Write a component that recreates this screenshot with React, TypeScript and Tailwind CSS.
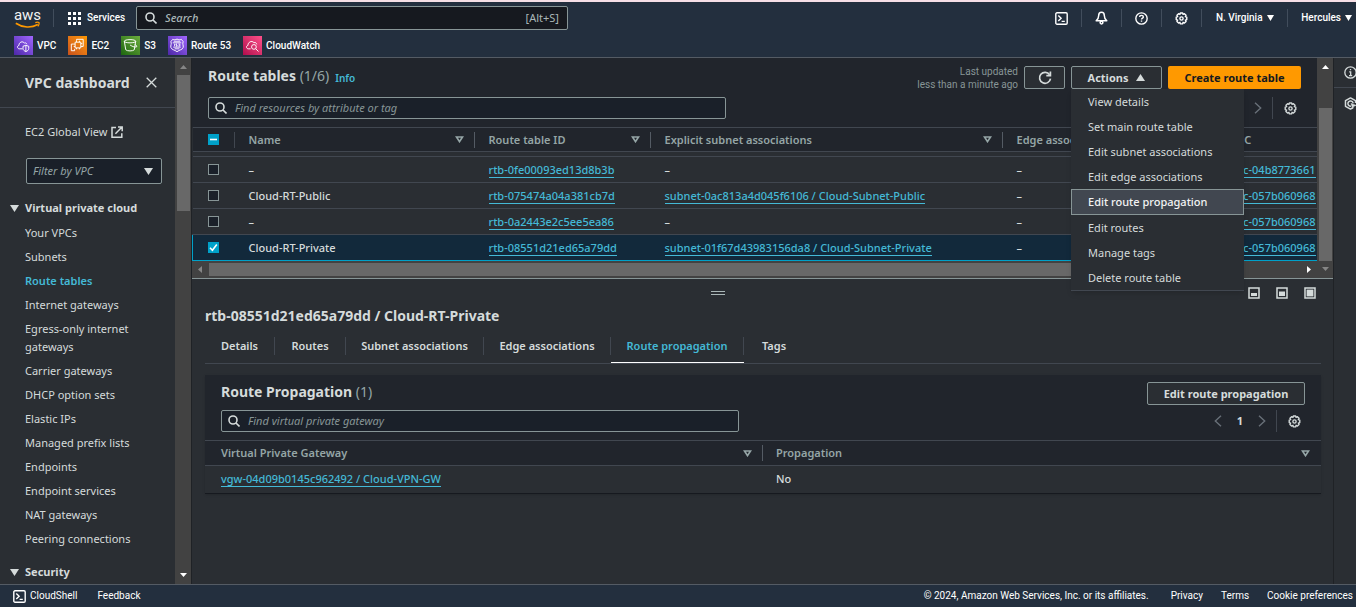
import React from "react";

type IconProps = { className?: string };

const NAV_FONT = "font-['Roboto','Noto_Sans',sans-serif]";

function SearchIcon({ className = "size-3" }: IconProps) {
  return (
    <svg viewBox="0 0 12 12" className={className} fill="none" stroke="currentColor" strokeWidth="1.6" aria-hidden="true">
      <circle cx="5" cy="5" r="4" />
      <path d="M8 8l3.5 3.5" />
    </svg>
  );
}

function GearIcon({ className = "size-[13px]" }: IconProps) {
  return (
    <svg viewBox="0 0 16 16" className={className} fill="none" stroke="currentColor" strokeWidth="1.7" strokeLinejoin="round" aria-hidden="true">
      <path d="M6.6 1.2h2.8l.5 1.7 1.7-.8 2 2-.9 1.6 1.8.6v3l-1.8.6.9 1.7-2 2-1.7-.9-.5 1.9H6.6l-.5-1.9-1.7.9-2-2 .9-1.7-1.8-.6v-3l1.8-.6-.9-1.6 2-2 1.7.8z" />
      <circle cx="8" cy="8" r="2" />
    </svg>
  );
}

function ShellIcon({ className = "size-[13px]" }: IconProps) {
  return (
    <svg viewBox="0 0 13 13" className={className} fill="none" stroke="currentColor" strokeWidth="1.4" aria-hidden="true">
      <rect x="0.8" y="0.8" width="11.4" height="11.4" rx="1.2" />
      <path d="M3.3 3.6l2.8 2.7-2.8 2.7M6.6 9.4h3.2" />
    </svg>
  );
}

function BellIcon() {
  return (
    <svg viewBox="0 0 13 14" className="h-[14px] w-[13px]" fill="none" stroke="currentColor" strokeWidth="1.5" strokeLinejoin="round" aria-hidden="true">
      <path d="M6.5 1.2c-1.900 0-2.800 1.500-2.800 3.200 0 2.600-.9 3.900-2.500 5.300h10.600c-1.600-1.400-2.500-2.700-2.500-5.300 0-1.700-.9-3.200-2.800-3.200z" />
      <circle cx="6.500" cy="11.600" r="1.400" />
    </svg>
  );
}

function HelpIcon() {
  return (
    <svg viewBox="0 0 14 14" className="size-[13px]" fill="none" stroke="currentColor" strokeWidth="1.5" aria-hidden="true">
      <circle cx="7" cy="7" r="6.100" />
      <path d="M5 5.500c0-1.200.900-1.900 2-1.900s2 .700 2 1.700c0 1.300-2 1.300-2 2.800M7 9.200v1.400" />
    </svg>
  );
}

function InfoIcon() {
  return (
    <svg viewBox="0 0 14 14" className="size-[13px]" fill="none" stroke="currentColor" strokeWidth="1.4" aria-hidden="true">
      <circle cx="7" cy="7" r="6.100" />
      <path d="M7 3.200v1.500M5.600 6.400H7.200v3.700M5.400 10.300h3.400" />
    </svg>
  );
}

function HexIcon() {
  return (
    <svg viewBox="0 0 14 14" className="size-[13px]" fill="none" stroke="currentColor" strokeWidth="1.600" strokeLinejoin="round" aria-hidden="true">
      <path d="M12.400 6.500V4L7 1 1.600 4v6L7 13l2.500-1.400" />
      <path d="M9.800 6.800A2.800 2.800 0 1 0 7.500 9.800" />
      <path d="M7.500 7l5.500 2-2.500 1-1 2.500z" fill="currentColor" strokeWidth=".6" />
    </svg>
  );
}

function RefreshIcon() {
  return (
    <svg viewBox="0 0 14 14" className="size-[14px]" fill="none" stroke="currentColor" strokeWidth="1.700" aria-hidden="true">
      <path d="M11.600 3.700A5.500 5.500 0 1 0 12.500 7.600" />
      <path d="M12.400 0.600v4H8.300" />
    </svg>
  );
}

function ExternalIcon() {
  return (
    <svg viewBox="0 0 12 12" className="size-3" fill="none" stroke="currentColor" strokeWidth="1.500" aria-hidden="true">
      <path d="M5 1.500H1v9.700h9.800V7.200M7 1h4.200v4.200M11 1L4.400 7.800" />
    </svg>
  );
}

function Triangle({ className = "size-2", up = false }: IconProps & { up?: boolean }) {
  return (
    <svg viewBox="0 0 10 8" preserveAspectRatio="none" className={className} fill="currentColor" aria-hidden="true">
      <path d={up ? "M0 8h10L5 0z" : "M0 0h10L5 8z"} />
    </svg>
  );
}

function SortIcon() {
  return (
    <svg viewBox="0 0 9 7" className="h-[7px] w-[9px] shrink-0" fill="none" stroke="currentColor" strokeWidth="1.700" aria-hidden="true">
      <path d="M1.500 1h6L4.500 5.600z" />
    </svg>
  );
}

function Chevron({ left = false }: { left?: boolean }) {
  return (
    <svg viewBox="0 0 8 12" className="h-3 w-2" fill="none" stroke="currentColor" strokeWidth="1.400" aria-hidden="true">
      <path d={left ? "M7 .7L1.300 6 7 11.300" : "M1 .7L6.700 6 1 11.300"} />
    </svg>
  );
}

function LayoutIcon({ kind }: { kind: "low" | "half" | "full" }) {
  return (
    <svg viewBox="0 0 12 12" className="size-3" aria-hidden="true">
      <rect x="1" y="1" width="10" height="10" fill="none" stroke="#d5dbdb" strokeWidth="1.500" />
      {kind === "low" && <path d="M3 6h6v3H3z" fill="#d5dbdb" />}
      {kind === "half" && <path d="M3 4.500h6v4.500H3z" fill="#d5dbdb" />}
      {kind === "full" && <path d="M2.600 2.600h6.800v6.800H2.600z" fill="#d5dbdb" />}
    </svg>
  );
}

function AwsLogo() {
  return (
    <a href="#home" aria-label="AWS home" className="flex w-[25px] flex-col items-center pt-[3px] text-[#f2f3f3]">
      <span className="text-[15px] font-normal leading-[11px]">aws</span>
      <svg viewBox="0 0 25 8" className="h-2 w-[25px]" fill="none" stroke="#ff9900" aria-hidden="true">
        <path d="M0.800 2.200c7 4.700 15.500 4.900 22 1.400" strokeWidth="1.700" />
        <path d="M20.300 1.600c1.500-.5 3-.4 3.700 0 .3 1.200-.2 2.600-1.200 3.700" strokeWidth="1.200" />
      </svg>
    </a>
  );
}

const SERVICES = [
  {
    name: "VPC",
    tile: "bg-linear-to-tr from-[#4d27a8] to-[#a166ff]",
    glyph: (
      <>
        <path d="M9 13.500H5.500C3.300 13.300 3 10.300 5.300 9.800 5 6.500 9.300 4.800 11 7.500c1-.7 2.300-.1 2.500 1.200" />
        <path d="M12.500 9.800l3 1v2.400c0 1.600-1.500 2.600-3 3.300-1.500-.7-3-1.700-3-3.300v-2.400zM12.500 10v6" />
      </>
    ),
  },
  {
    name: "EC2",
    tile: "bg-linear-to-tr from-[#c8511b] to-[#ff9900]",
    glyph: (
      <>
        <path d="M7.500 6.500h6v6h-6zM7 13.500v2H3.500v-7H6M9 5V3.500h7V11h-1.500" />
        <path d="M9 5v1.500M12 5v1.500M6 8.500h1.500M6 11h1.500M13.500 8H15M13.500 11H15M9 12.500V14M12 12.500V14" />
      </>
    ),
  },
  {
    name: "S3",
    tile: "bg-linear-to-tr from-[#1b660f] to-[#6cae3e]",
    glyph: (
      <>
        <ellipse cx="9.500" cy="5.500" rx="6" ry="1.700" />
        <path d="M3.500 5.500l1.500 9c1.500 1.600 7.500 1.600 9 0l1.500-9M9.500 9.500c3 2 5.500 2.500 7 1.800.6-1-1-2-2-2.300" />
      </>
    ),
  },
  {
    name: "Route 53",
    tile: "bg-linear-to-tr from-[#4d27a8] to-[#a166ff]",
    glyph: (
      <>
        <path d="M5 3.500c1.500.8 3 .6 4.500-.3 1.500.9 3 1.100 4.500.3l2 2.500c-1.200 2 .5 4 0 6-.6 2.500-4 2.500-6.500 4.500-2.500-2-5.900-2-6.500-4.500-.5-2 1.200-4 0-6z" />
        <path d="M5 7.200h9M5.500 11.700h8M7 8.200v2.500M9.500 8.500h-1v1h1v1.200h-1M11 8.500h1.500v2H11M6 5.500h7M7 13.500h5" />
      </>
    ),
  },
  {
    name: "CloudWatch",
    tile: "bg-linear-to-tr from-[#b0084d] to-[#ff4f8b]",
    glyph: (
      <>
        <path d="M8 13.500H5.500C3.300 13.300 3 10.300 5.300 9.800 5 6.500 9.300 4.300 11.500 7c1.500-.5 2.800.3 3 1.800" />
        <circle cx="11.500" cy="11.500" r="2.500" />
        <path d="M13.300 13.300l3 3" />
      </>
    ),
  },
];

function TopNav() {
  const iconButtons = [
    { label: "CloudShell", icon: <ShellIcon /> },
    { label: "Notifications", icon: <BellIcon /> },
    { label: "Help", icon: <HelpIcon /> },
    { label: "Settings", icon: <GearIcon /> },
  ];
  return (
    <header className={`shrink-0 border-t-2 border-b border-t-[#f6dfe6] border-b-[#545b64] bg-[#232f3e] text-[10px] font-medium text-white ${NAV_FONT}`}>
      <div className="flex h-8 items-center">
        <div className="flex w-[136px] shrink-0 items-center pl-[15px]">
          <AwsLogo />
          <span className="ml-[13px] h-[18px] w-px bg-[#414d5c]" />
          <button className="ml-[14px] flex items-center gap-[6px]">
            <svg viewBox="0 0 13 13" className="size-[13px]" fill="currentColor" aria-hidden="true">
              {[0, 5, 10].map((y) => [0, 5, 10].map((x) => <rect key={`${x}-${y}`} x={x} y={y} width="3" height="3" />))}
            </svg>
            Services
          </button>
        </div>
        <label className="flex h-6 w-[432px] items-center gap-2 rounded-xs border border-[#879596] bg-[#16191f] px-2 text-[#d5dbdb]">
          <SearchIcon className="size-3" />
          <input
            aria-label="Search"
            placeholder="Search"
            className="min-w-0 flex-1 bg-transparent text-[11px] outline-none placeholder:text-[#aab7b8] placeholder:italic font-['Noto_Sans',sans-serif]"
          />
          <span className="font-['Noto_Sans',sans-serif] text-[11px] font-normal text-[#aab7b8]">[Alt+S]</span>
        </label>
        <nav className="ml-auto flex items-center" aria-label="Account">
          {iconButtons.map((b) => (
            <button key={b.label} aria-label={b.label} className="flex h-[18px] w-10 items-center justify-center border-r border-[#414d5c]">
              {b.icon}
            </button>
          ))}
          <button className="flex h-[18px] w-[86px] items-center justify-center gap-1 border-r border-[#414d5c]">
            N. Virginia <Triangle className="h-[6px] w-[7px]" />
          </button>
          <button className="flex h-[18px] items-center gap-1 pr-1 pl-[13px]">
            Hercules <Triangle className="h-[6px] w-[7px]" />
          </button>
        </nav>
      </div>
      <nav className="flex h-[23px] items-center gap-3 pl-[14px]" aria-label="Favorites">
        {SERVICES.map((s) => (
          <a key={s.name} href={`#${s.name}`} className="flex items-center gap-1">
            <span className={`flex size-[19px] ${s.tile}`}>
              <svg viewBox="0 0 20 20" className="size-full" fill="none" stroke="white" strokeWidth="1" aria-hidden="true">
                {s.glyph}
              </svg>
            </span>
            {s.name}
          </a>
        ))}
      </nav>
    </header>
  );
}

const VPC_LINKS = [
  "Your VPCs",
  "Subnets",
  "Route tables",
  "Internet gateways",
  "Egress-only internet gateways",
  "Carrier gateways",
  "DHCP option sets",
  "Elastic IPs",
  "Managed prefix lists",
  "Endpoints",
  "Endpoint services",
  "NAT gateways",
  "Peering connections",
];

function Sidebar() {
  return (
    <div className="flex w-48 shrink-0">
      <aside className="flex min-w-0 flex-1 flex-col overflow-hidden">
        <div className="flex h-[50px] shrink-0 items-center justify-between border-b border-[#414750] pr-[18px] pl-[25px]">
          <h2 className="text-[14px] font-bold">VPC dashboard</h2>
          <button aria-label="Close navigation">
            <svg viewBox="0 0 11 11" className="size-[11px]" stroke="currentColor" strokeWidth="1.300" aria-hidden="true">
              <path d="M.7.7l9.600 9.600M10.300.7L.7 10.300" />
            </svg>
          </button>
        </div>
        <a href="#global" className="mt-[15px] flex items-center gap-1 pl-[25px] leading-[18px]">
          EC2 Global View <ExternalIcon />
        </a>
        <div className="relative mt-[17px] mr-[13px] ml-[26px] flex shrink-0 items-center">
          <select
            aria-label="Filter by VPC"
            defaultValue=""
            className="h-[26px] w-full appearance-none rounded-xs border border-[#879596] bg-[#1a2029] pl-[6px] text-[#95a5a6] italic"
          >
            <option value="">Filter by VPC</option>
          </select>
          <Triangle className="pointer-events-none absolute right-[9px] h-[7px] w-[9px]" />
        </div>
        <button className="mt-[15px] flex items-center gap-[6px] pl-[10px] text-left font-bold leading-[18px]">
          <Triangle className="h-[7px] w-[9px]" /> Virtual private cloud
        </button>
        <ul className="mt-[7px] flex flex-col gap-[6px] pr-5 pl-[25px] leading-[18px]">
          {VPC_LINKS.map((l) => (
            <li key={l}>
              <a href={`#${l}`} className={l === "Route tables" ? "font-semibold text-[#44b9d6]" : undefined}>
                {l}
              </a>
            </li>
          ))}
        </ul>
        <button className="mt-[15px] flex shrink-0 items-center gap-[6px] pl-[10px] text-left font-bold leading-[18px]">
          <Triangle className="h-[7px] w-[9px]" /> Security
        </button>
      </aside>
      <div className="flex w-[17px] flex-col items-center border-r border-[#1f2226] bg-[#424242] py-[7px]" aria-hidden="true">
        <Triangle up className="h-1 w-[7px] text-[#868686]" />
        <span className="mt-[6px] h-[136px] w-[13px] bg-[#686868]" />
        <Triangle className="mt-auto h-1 w-[7px] text-white" />
      </div>
    </div>
  );
}

function Checkbox({ label, state }: { label: string; state: "off" | "on" | "mixed" }) {
  return (
    <span className="relative flex size-[11px]">
      <input
        type="checkbox"
        aria-label={label}
        defaultChecked={state !== "off"}
        className="size-[11px] appearance-none border border-[#879596] bg-[#1a2029] checked:border-[#00a1c9] checked:bg-[#00a1c9]"
      />
      {state !== "off" && (
        <svg viewBox="0 0 11 11" className="pointer-events-none absolute inset-0 size-[11px]" fill="none" stroke="white" strokeWidth="1.600" aria-hidden="true">
          <path d={state === "on" ? "M2 5.800l2.400 2.400L8.800 2.600" : "M2 5.500h7"} />
        </svg>
      )}
    </span>
  );
}

function HeadCell({ children, sort = true, divider = true }: { children: React.ReactNode; sort?: boolean; divider?: boolean }) {
  return (
    <th scope="col" className="h-6 p-0 text-left font-semibold text-[#95a5a6]">
      <div className={`flex h-4 items-center justify-between whitespace-nowrap pr-[10px] pl-[14px] ${divider ? "border-r border-[#545b64]" : ""}`}>
        {children}
        {sort && <SortIcon />}
      </div>
    </th>
  );
}

function Link({ children }: { children: React.ReactNode }) {
  return (
    <a href="#resource" className="border-b border-[#44b9d6] font-medium text-[#44b9d6]">
      {children}
    </a>
  );
}

const ROUTE_TABLES = [
  { name: "–", id: "rtb-0fe00093ed13d8b3b", subnet: "–", vpc: "vpc-04b8773661" },
  { name: "Cloud-RT-Public", id: "rtb-075474a04a381cb7d", subnet: "subnet-0ac813a4d045f6106 / Cloud-Subnet-Public", vpc: "vpc-057b060968" },
  { name: "–", id: "rtb-0a2443e2c5ee5ea86", subnet: "–", vpc: "vpc-057b060968" },
  { name: "Cloud-RT-Private", id: "rtb-08551d21ed65a79dd", subnet: "subnet-01f67d43983156da8 / Cloud-Subnet-Private", vpc: "vpc-057b060968", selected: true },
];

const ACTIONS = [
  "View details",
  "Set main route table",
  "Edit subnet associations",
  "Edit edge associations",
  "Edit route propagation",
  "Edit routes",
  "Manage tags",
  "Delete route table",
];

function SearchField({ placeholder }: { placeholder: string }) {
  return (
    <label className="flex h-[22px] w-[518px] items-center gap-2 rounded-xs border border-[#879596] bg-[#1a2029] px-[6px] text-[#d5dbdb]">
      <SearchIcon className="size-3" />
      <input aria-label={placeholder} placeholder={placeholder} className="min-w-0 flex-1 bg-transparent outline-none placeholder:text-[#879596] placeholder:italic" />
    </label>
  );
}

function RouteTablesPanel() {
  const cell = "truncate py-0 pr-0 pl-[14px] font-medium";
  return (
    <section className="flex shrink-0 border-b border-[#879596]">
      <div className="min-w-0 flex-1">
        <div className="bg-[#21252c] px-4 py-2">
          <div className="flex h-[23px] items-center gap-[6px]">
            <h1 className="self-start text-[14px] leading-5 font-bold">
              Route tables <span className="font-normal text-[#95a5a6]">(1/6)</span>
            </h1>
            <a href="#info" className="text-[10px] font-semibold text-[#44b9d6]">
              Info
            </a>
            <p className={`ml-auto text-right text-[10px] leading-[13px] text-[#879596] ${NAV_FONT}`}>
              Last updated
              <br />
              less than a minute ago
            </p>
            <button aria-label="Refresh" className="flex h-[23px] w-[41px] items-center justify-center rounded-xs border border-[#879596] bg-[#2a2e33]">
              <RefreshIcon />
            </button>
            <div className="relative">
              <button className="flex h-[23px] w-[91px] items-center justify-center gap-2 rounded-xs border border-[#879596] bg-[#2a2e33] font-bold" aria-expanded="true">
                Actions <Triangle up className="h-[7px] w-[9px]" />
              </button>
              <ul className="absolute top-full left-0 z-10 w-[173px] border-b border-[#414750] bg-[#2a2e33] shadow-md" role="menu">
                {ACTIONS.map((a) => (
                  <li key={a} role="none">
                    <button
                      role="menuitem"
                      className={
                        a === "Edit route propagation"
                          ? "flex h-[26px] w-full items-center border border-[#879596] bg-[#414750] pl-4 font-medium text-[#f2f3f3]"
                          : "flex h-[25px] w-full items-center pl-[17px]"
                      }
                    >
                      {a}
                    </button>
                  </li>
                ))}
              </ul>
            </div>
            <button className="h-[23px] w-[133px] rounded-xs bg-[#ff9900] font-bold whitespace-nowrap text-[#16191f]">Create route table</button>
          </div>
          <div className="mt-2 flex items-center justify-between">
            <SearchField placeholder="Find resources by attribute or tag" />
            <div className="flex items-center">
              <button aria-label="Next page" className="text-[#687078]">
                <Chevron />
              </button>
              <span className="ml-[10px] h-[22px] w-px bg-[#414750]" />
              <button aria-label="Preferences" className="mr-1 ml-[11px]">
                <GearIcon />
              </button>
            </div>
          </div>
        </div>
        <div className="overflow-hidden">
          <table className="w-[1176px] table-fixed border-collapse">
            <colgroup>
              <col className="w-[42px]" />
              <col className="w-[240px]" />
              <col className="w-[176px]" />
              <col className="w-[352px]" />
              <col className="w-[214px]" />
              <col />
            </colgroup>
            <thead className="border-y border-[#414750] bg-[#21252c]">
              <tr>
                <th scope="col" className="p-0">
                  <div className="flex h-4 items-center border-r border-[#414750] pl-[15px]">
                    <Checkbox label="Select all route tables" state="mixed" />
                  </div>
                </th>
                <HeadCell>Name</HeadCell>
                <HeadCell>Route table ID</HeadCell>
                <HeadCell>Explicit subnet associations</HeadCell>
                <HeadCell>Edge associations</HeadCell>
                <HeadCell sort={false} divider={false}>
                  VPC
                </HeadCell>
              </tr>
            </thead>
            <tbody>
              <tr className="border-b border-[#414750]" aria-hidden="true">
                <td colSpan={6} className="h-[5px] p-0" />
              </tr>
              {ROUTE_TABLES.map((r) => (
                <tr key={r.id} className={r.selected ? "h-[26px] border border-[#00a1c9] bg-[#12293b]" : "h-[26px] border-b border-[#414750]"}>
                  <td className="py-0 pr-0 pl-[15px]">
                    <Checkbox label={`Select ${r.id}`} state={r.selected ? "on" : "off"} />
                  </td>
                  <td className={cell}>{r.name}</td>
                  <td className={cell}>
                    <Link>{r.id}</Link>
                  </td>
                  <td className={cell}>{r.subnet === "–" ? "–" : <Link>{r.subnet}</Link>}</td>
                  <td className={cell}>–</td>
                  <td className="overflow-hidden py-0 pr-0 pl-[14px]">
                    <Link>{r.vpc}</Link>
                  </td>
                </tr>
              ))}
            </tbody>
          </table>
        </div>
        <div className="flex h-[17px] items-center bg-[#424242] px-[6px]" aria-hidden="true">
          <svg viewBox="0 0 4 7" className="h-[7px] w-1" fill="#868686">
            <path d="M4 0v7L0 3.500z" />
          </svg>
          <span className="ml-[7px] h-[13px] w-[80%] bg-[#686868]" />
          <svg viewBox="0 0 4 7" className="ml-auto h-[7px] w-1" fill="white">
            <path d="M0 0v7l4-3.500z" />
          </svg>
        </div>
      </div>
      <div className="flex w-4 flex-col items-center bg-[#424242] py-[7px]" aria-hidden="true">
        <Triangle up className="h-1 w-[7px] text-white" />
        <span className="mt-[39px] h-[153px] w-[13px] bg-[#686868]" />
        <Triangle className="mt-auto h-1 w-[7px] text-[#868686]" />
      </div>
    </section>
  );
}

const TABS = [
  { name: "Details", width: "w-[70px]" },
  { name: "Routes", width: "w-[71px]" },
  { name: "Subnet associations", width: "w-[138px]" },
  { name: "Edge associations", width: "w-[127px]" },
  { name: "Route propagation", width: "w-[133px]" },
  { name: "Tags", width: "w-[60px]" },
];

function DetailsPanel() {
  return (
    <section>
      <div className="flex h-[27px] items-center">
        <div className="flex flex-1 justify-center">
          <button aria-label="Resize panel" className="h-1 w-[14px] border-y border-[#aab7b8]" />
        </div>
        <div className="flex w-[90px] gap-4">
          <button aria-label="Small split view" className="ml-[5px]">
            <LayoutIcon kind="low" />
          </button>
          <button aria-label="Half split view">
            <LayoutIcon kind="half" />
          </button>
          <button aria-label="Full page view">
            <LayoutIcon kind="full" />
          </button>
        </div>
      </div>
      <div className="pr-3 pl-[13px]">
        <h2 className="text-[14px] leading-5 font-bold">rtb-08551d21ed65a79dd / Cloud-RT-Private</h2>
        <div className="flex border-b border-[#414750] pt-1" role="tablist">
          {TABS.map((t, i) => {
            const active = t.name === "Route propagation";
            return (
              <button
                key={t.name}
                role="tab"
                aria-selected={active}
                className={`${t.width} flex h-[33px] items-center border-b ${active ? "border-white text-[#44b9d6]" : "border-transparent"}`}
              >
                <span className={`flex h-[18px] flex-1 items-center justify-center font-semibold whitespace-nowrap ${i < TABS.length - 1 ? "border-r border-[#414750]" : ""}`}>
                  {t.name}
                </span>
              </button>
            );
          })}
        </div>
        <div className="mt-[11px] border-b border-[#16191f] shadow-sm">
          <div className="bg-[#21252c] px-4 pt-[7px] pb-2">
            <div className="flex h-[23px] items-center justify-between">
              <h3 className="self-start text-[14px] leading-5 font-bold">
                Route Propagation <span className="font-normal text-[#95a5a6]">(1)</span>
              </h3>
              <button className="h-[23px] w-[158px] rounded-xs border border-[#879596] bg-[#2a2e33] font-bold">Edit route propagation</button>
            </div>
            <div className="mt-[5px] flex items-center justify-between">
              <SearchField placeholder="Find virtual private gateway" />
              <div className="flex items-center">
                <button aria-label="Previous page" className="text-[#687078]">
                  <Chevron left />
                </button>
                <button className="mx-[15px] font-bold">1</button>
                <button aria-label="Next page" className="text-[#687078]">
                  <Chevron />
                </button>
                <span className="ml-[10px] h-[22px] w-px bg-[#414750]" />
                <button aria-label="Preferences" className="mr-1 ml-[11px]">
                  <GearIcon />
                </button>
              </div>
            </div>
          </div>
          <table className="w-full table-fixed border-collapse">
            <colgroup>
              <col className="w-[50%]" />
              <col />
            </colgroup>
            <thead className="border-y border-[#414750] bg-[#21252c]">
              <tr>
                <th scope="col" className="h-[25px] p-0 text-left font-semibold text-[#95a5a6]">
                  <div className="flex h-4 items-center justify-between border-r border-[#545b64] pr-[10px] pl-4">
                    Virtual Private Gateway <SortIcon />
                  </div>
                </th>
                <th scope="col" className="h-[25px] p-0 text-left font-semibold text-[#95a5a6]">
                  <div className="flex h-4 items-center justify-between pr-[11px] pl-[13px]">
                    Propagation <SortIcon />
                  </div>
                </th>
              </tr>
            </thead>
            <tbody>
              <tr className="h-[27px]">
                <td className="py-0 pr-0 pl-4">
                  <Link>vgw-04d09b0145c962492 / Cloud-VPN-GW</Link>
                </td>
                <td className="py-0 pr-0 pl-[13px] font-medium">No</td>
              </tr>
            </tbody>
          </table>
        </div>
      </div>
    </section>
  );
}

function Footer() {
  return (
    <footer className={`flex h-[23px] shrink-0 items-center border-t border-[#545b64] bg-[#232f3e] pr-[3px] pl-[13px] text-[10px] text-white ${NAV_FONT}`}>
      <a href="#shell" className="flex items-center gap-1">
        <ShellIcon /> CloudShell
      </a>
      <a href="#feedback" className="ml-5">
        Feedback
      </a>
      <span className="ml-auto">© 2024, Amazon Web Services, Inc. or its affiliates.</span>
      <a href="#privacy" className="ml-[22px]">
        Privacy
      </a>
      <a href="#terms" className="ml-[18px]">
        Terms
      </a>
      <a href="#cookies" className="ml-[18px]">
        Cookie preferences
      </a>
    </footer>
  );
}

export default function App() {
  return (
    <div className="flex h-screen flex-col overflow-hidden bg-[#2a2e33] font-['Noto_Sans',sans-serif] text-[11px] leading-4 text-[#d5dbdb]">
      <TopNav />
      <div className="flex min-h-0 flex-1">
        <Sidebar />
        <main className="min-w-0 flex-1">
          <RouteTablesPanel />
          <DetailsPanel />
        </main>
        <aside className="w-[23px] shrink-0 overflow-hidden border-l border-[#1f2226]">
          <button aria-label="Info" className="flex h-[30px] w-full items-center border-b border-[#414750] pl-[10px]">
            <span className="shrink-0">
              <InfoIcon />
            </span>
          </button>
          <button aria-label="Diagnostics" className="flex h-[30px] w-full items-center pl-[10px]">
            <span className="shrink-0">
              <HexIcon />
            </span>
          </button>
        </aside>
      </div>
      <Footer />
    </div>
  );
}
